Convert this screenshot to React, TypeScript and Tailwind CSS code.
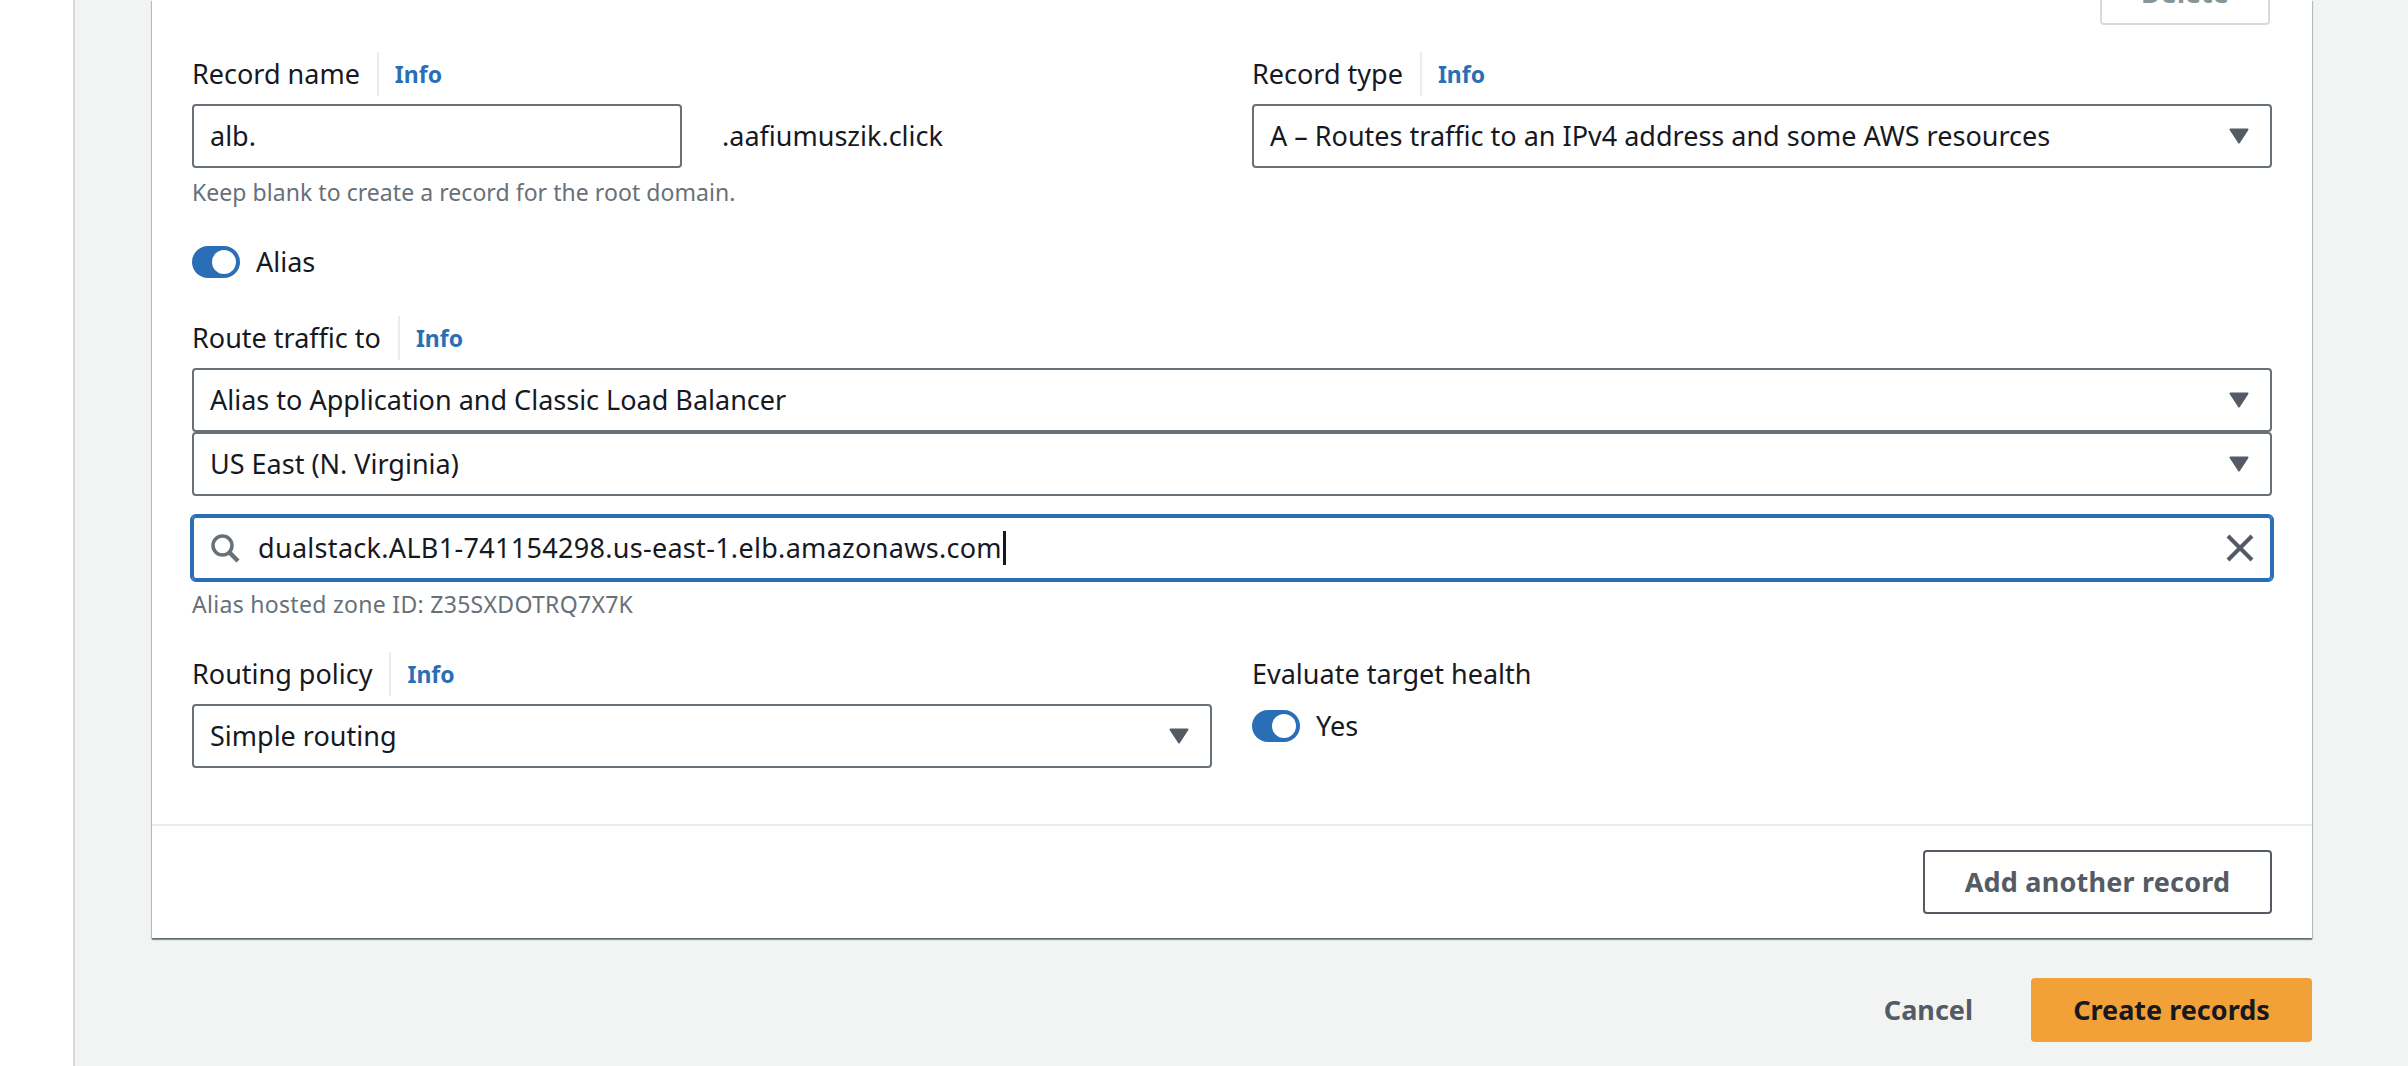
const font = "font-['Noto_Sans','Open_Sans',sans-serif]";

function Label({ text, info = true }: { text: string; info?: boolean }) {
  return (
    <div className="flex h-[44px] items-center">
      <span className="text-[27px] leading-[44px] text-[#16191f]">{text}</span>
      {info && (
        <>
          <span className="ml-[17px] h-[44px] w-[2px] bg-[#eaeded]" />
          <span className="ml-[16px] text-[23px] font-bold leading-[44px] text-[#2a6fb5]">Info</span>
        </>
      )}
    </div>
  );
}

function Arrow() {
  return (
    <svg width="20" height="16" viewBox="0 0 20 16" className="shrink-0">
      <path d="M1.5 1.5h17L10 14.5z" fill="#545b64" stroke="#545b64" strokeWidth="2" strokeLinejoin="round" />
    </svg>
  );
}

function Select({ value }: { value: string }) {
  return (
    <div className="flex h-[64px] items-center justify-between rounded-[4px] border-2 border-[#687078] bg-white pl-[16px] pr-[21px]">
      <span className="text-[27px] text-[#16191f]">{value}</span>
      <Arrow />
    </div>
  );
}

function Toggle() {
  return (
    <span className="flex h-[32px] w-[48px] items-center justify-end rounded-full bg-[#2a6fb5] pr-[4px]">
      <span className="h-[24px] w-[24px] rounded-full bg-white" />
    </span>
  );
}

export default function App() {
  return (
    <div className={`flex h-[1066px] w-[2408px] overflow-hidden bg-white ${font}`}>
      <div className="w-[73px] shrink-0 bg-white" />
      <main className="flex-1 border-l-2 border-[#d5dbdb] bg-[#f2f3f3] pl-[77px] pr-[96px]">
        <section className="w-[2160px] bg-white pb-[24px] shadow-[0_2px_1px_0_rgba(0,28,36,0.4),1px_1px_1px_0_rgba(0,28,36,0.2),-1px_1px_1px_0_rgba(0,28,36,0.2)]">
          <div className="px-[40px]">
            <div className="mb-[27px] flex h-[25px] items-end justify-end overflow-hidden pr-[2px]">
              <button className="flex h-[64px] w-[170px] shrink-0 items-center justify-center rounded-[4px] border-2 border-[#d5dbdb] bg-white text-[27px] font-bold text-[#879596]">
                Delete
              </button>
            </div>

            <div className="grid grid-cols-2 gap-x-[40px]">
              <div>
                <Label text="Record name" />
                <div className="mt-[8px] flex items-center">
                  <div className="flex h-[64px] w-[490px] items-center rounded-[4px] border-2 border-[#687078] pl-[16px] text-[27px] text-[#16191f]">
                    alb.
                  </div>
                  <span className="ml-[40px] text-[27px] text-[#16191f]">.aafiumuszik.click</span>
                </div>
                <p className="mt-[6px] h-[36px] text-[23px] leading-[36px] tracking-[0.05px] text-[#687078]">
                  Keep blank to create a record for the root domain.
                </p>
              </div>
              <div>
                <Label text="Record type" />
                <div className="mt-[8px]">
                  <Select value="A – Routes traffic to an IPv4 address and some AWS resources" />
                </div>
              </div>
            </div>

            <div className="mt-[36px] flex h-[32px] items-center gap-[16px]">
              <Toggle />
              <span className="text-[27px] text-[#16191f]">Alias</span>
            </div>

            <div className="mt-[38px]">
              <Label text="Route traffic to" />
            </div>
            <div className="mt-[8px]">
              <Select value="Alias to Application and Classic Load Balancer" />
              <Select value="US East (N. Virginia)" />
            </div>

            <div className="mt-[20px] flex h-[64px] items-center rounded-[4px] border-2 border-[#2a6fb5] bg-white pl-[16px] pr-[16px] outline-2 outline-[#2a6fb5]">
              <svg width="30" height="30" viewBox="0 0 30 30" className="shrink-0" fill="none" stroke="#687078" strokeWidth="3.5">
                <circle cx="12.5" cy="12.5" r="9.5" />
                <path d="M19.5 19.5L28 28" strokeWidth="4.5" />
              </svg>
              <span className="ml-[18px] text-[27px] tracking-[0.3px] text-[#16191f]">dualstack.ALB1-741154298.us-east-1.elb.amazonaws.com</span>
              <span className="ml-[1px] h-[34px] w-[3px] bg-[#16191f]" />
              <svg width="28" height="28" viewBox="0 0 28 28" className="ml-auto shrink-0" fill="none" stroke="#545b64" strokeWidth="4">
                <path d="M2 2l24 24M26 2L2 26" />
              </svg>
            </div>
            <p className="mt-[6px] h-[36px] text-[23px] leading-[36px] tracking-[0.3px] text-[#687078]">Alias hosted zone ID: Z35SXDOTRQ7X7K</p>

            <div className="mt-[30px] grid grid-cols-2 gap-x-[40px]">
              <div>
                <Label text="Routing policy" />
                <div className="mt-[8px]">
                  <Select value="Simple routing" />
                </div>
              </div>
              <div>
                <Label text="Evaluate target health" info={false} />
                <div className="mt-[14px] flex h-[32px] items-center gap-[16px]">
                  <Toggle />
                  <span className="text-[27px] text-[#16191f]">Yes</span>
                </div>
              </div>
            </div>
          </div>

          <div className="mt-[56px] h-[2px] bg-[#eaeded]" />

          <div className="mt-[24px] flex justify-end pr-[40px]">
            <button className="flex h-[64px] w-[349px] items-center justify-center rounded-[4px] border-2 border-[#545b64] bg-white text-[27px] font-bold tracking-[0.2px] text-[#545b64]">
              Add another record
            </button>
          </div>
        </section>

        <div className="mt-[40px] flex items-center justify-end">
          <span className="text-[27px] font-bold text-[#545b64]">Cancel</span>
          <button className="ml-[58px] flex h-[64px] w-[281px] items-center justify-center rounded-[4px] bg-[#f2a038] text-[27px] font-bold text-[#16191f]">
            Create records
          </button>
        </div>
      </main>
    </div>
  );
}
